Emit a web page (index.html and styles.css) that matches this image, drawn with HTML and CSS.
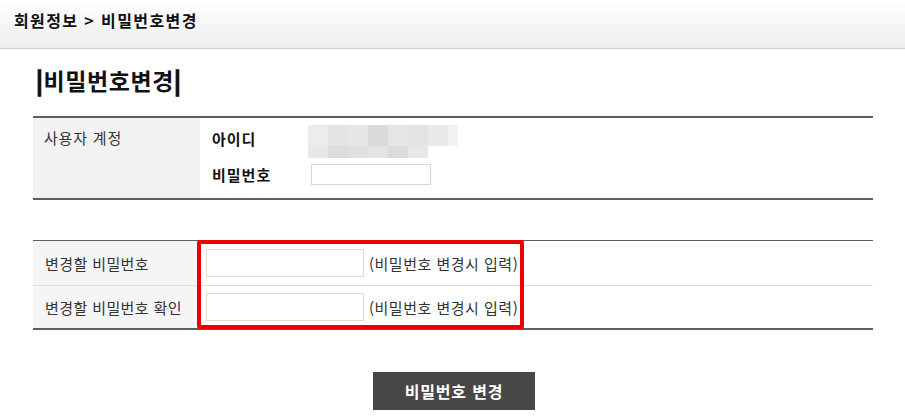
FILE: index.html
```html
<!DOCTYPE html>
<html lang="ko">
<head>
<meta charset="utf-8">
<link rel="stylesheet" href="styles.css">
</head>
<body>
<div class="header"><span>회원정보 &gt; 비밀번호변경</span></div>
<div class="content">
  <h2 class="title"><span class="bar">|</span>비밀번호변경<span class="bar">|</span></h2>
  <div class="tbl tbl1">
    <div class="label">사용자 계정</div>
    <div class="value">
      <div class="row-id">
        <span class="key">아이디</span>
        <div class="mosaic">
          <div class="m-row">
            <i style="background:#ececec"></i><i style="background:#e3e3e3"></i><i style="background:#e6e6e6"></i><i style="background:#dadada"></i><i style="background:#e5e5e5"></i><i style="background:#e4e4e4"></i><i style="background:#e9e9e9"></i><i style="background:#f2f2f2;width:10px"></i>
          </div>
          <div class="m-row short">
            <i style="background:#e8e8e8"></i><i style="background:#dcdcdc"></i><i style="background:#e0e0e0"></i><i style="background:#e3e3e3"></i><i style="background:#dbdbdb"></i><i style="background:#e7e7e7"></i>
          </div>
        </div>
      </div>
      <div class="row-pw">
        <span class="key">비밀번호</span>
        <input class="pw-input" type="password">
      </div>
    </div>
  </div>
  <div class="tbl2-wrap">
    <div class="tbl2">
      <div class="row2">
        <div class="label2">변경할 비밀번호</div>
        <div class="value2"><input class="in2" type="password"><span class="hint">(비밀번호 변경시 입력)</span></div>
      </div>
      <div class="row2">
        <div class="label2">변경할 비밀번호 확인</div>
        <div class="value2"><input class="in2" type="password"><span class="hint">(비밀번호 변경시 입력)</span></div>
      </div>
    </div>
    <div class="highlight"></div>
  </div>
  <div class="actions"><button class="btn">비밀번호 변경</button></div>
</div>
</body>
</html>
```
FILE: styles.css
```css
* { box-sizing: border-box; }
body {
  margin: 0;
  font-family: "Noto Sans CJK KR", "Noto Sans", sans-serif;
  color: #222;
  background: #fff;
}
.header {
  height: 49px;
  background: linear-gradient(#ffffff, #eceef0);
  border-bottom: 1px solid #cdcdcd;
  padding: 8px 0 0 14px;
  font-size: 16px;
  letter-spacing: 1.4px;
  font-weight: bold;
  color: #111;
}
.content {
  padding: 0 32px 0 33px;
}
.title {
  margin: 14px 0 0 3px;
  font-size: 23px;
  letter-spacing: 0.6px;
  font-weight: bold;
  color: #111;
  line-height: 34px;
  height: 53px;
}
.bar {
  -webkit-text-stroke: 1.4px #111;
}
.tbl1 {
  display: flex;
  border-top: 2px solid #5e5e5e;
  border-bottom: 2px solid #5e5e5e;
  height: 84px;
}
.label {
  width: 167px;
  background: #f2f2f2;
  padding: 9px 0 0 11px;
  font-size: 15px;
  letter-spacing: 0.8px;
  color: #333;
}
.value {
  flex: 1;
  padding: 7px 0 0 12px;
}
.key {
  display: inline-block;
  width: 96px;
  font-size: 15px;
  letter-spacing: 1px;
  font-weight: bold;
  color: #111;
}
.row-id {
  display: flex;
  align-items: flex-start;
  height: 42px;
}
.row-id .key { padding-top: 3px; }
.mosaic { display: flex; flex-direction: column; }
.m-row { display: flex; height: 21px; }
.m-row.short { height: 12px; }
.m-row i { display: block; width: 20px; height: 100%; }
.row-pw {
  display: flex;
  align-items: center;
  margin-top: -3px;
}
.pw-input {
  margin-left: 3px;
  width: 120px;
  height: 21px;
  border: 1px solid #d6d6d6;
  background: #fff;
}
.tbl2-wrap {
  position: relative;
  margin-top: 40px;
}
.tbl2 {
  border-top: 1px solid #5e5e5e;
  border-bottom: 2px solid #5e5e5e;
}
.row2 {
  display: flex;
  height: 44px;
}
.row2 + .row2 { border-top: 1px solid #dddddd; height: 43px; }
.label2 {
  width: 165px;
  background: #f5f5f5;
  padding-left: 12px;
  display: flex;
  align-items: center;
  font-size: 15px;
  letter-spacing: 0.4px;
  color: #333;
}
.value2 {
  display: flex;
  align-items: center;
  padding-left: 8px;
}
.in2 {
  width: 158px;
  height: 28px;
  border: 1px solid #dcdcdc;
  background: #fff;
  margin-right: 5px;
}
.hint {
  font-size: 15px;
  letter-spacing: 0.5px;
  color: #333;
}
.highlight {
  position: absolute;
  left: 164px;
  top: 0;
  width: 327px;
  height: 89px;
  border: 4px solid #ee0000;
  border-radius: 3px;
}
.actions {
  display: flex;
  justify-content: center;
  margin-top: 42px;
  padding-left: 2px;
}
.btn {
  width: 162px;
  height: 38px;
  background: #474747;
  border: none;
  color: #fff;
  font-family: inherit;
  font-size: 16px;
  letter-spacing: 0.8px;
  font-weight: bold;
}
```
